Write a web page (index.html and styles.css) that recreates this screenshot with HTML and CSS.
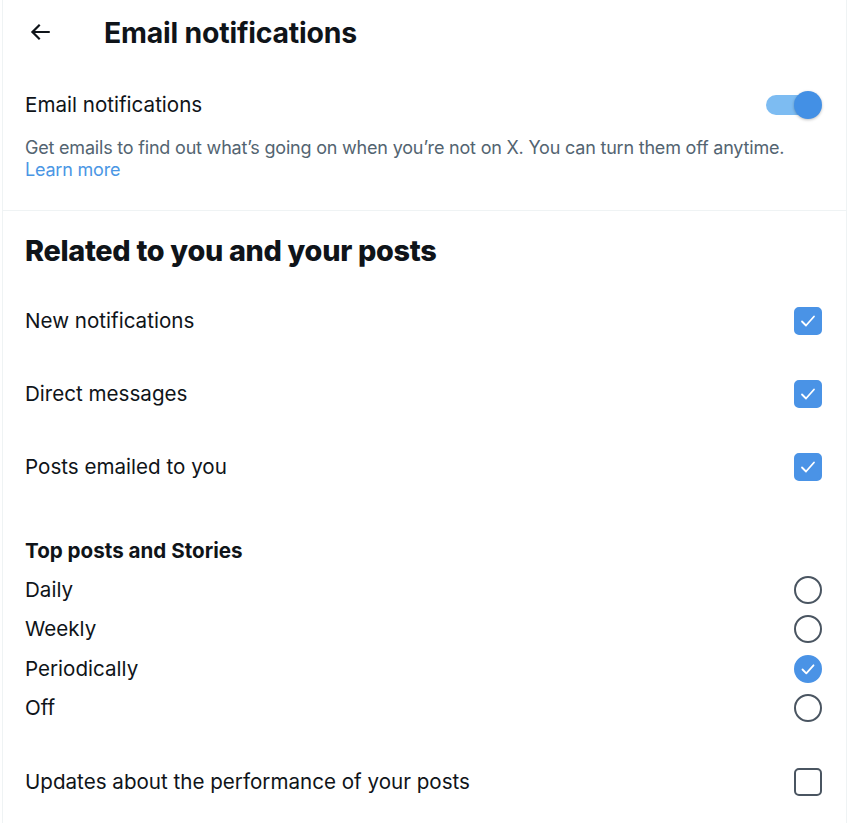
FILE: index.html
```html
<!DOCTYPE html>
<html lang="en">
<head>
<meta charset="utf-8">
<title>Email notifications</title>
<link rel="stylesheet" href="styles.css">
</head>
<body>
<main class="panel">
  <header class="topbar">
    <button class="back" aria-label="Back">
      <svg viewBox="0 0 24 24" width="26" height="26"><path d="M7.414 13l5.043 5.04-1.414 1.42L3.586 12l7.457-7.46 1.414 1.42L7.414 11H21v2H7.414z" fill="#0f1419"/></svg>
    </button>
    <h1 class="title">Email notifications</h1>
  </header>

  <section class="master">
    <div class="master-row">
      <span class="label">Email notifications</span>
      <span class="toggle"><span class="track"></span><span class="knob"></span></span>
    </div>
    <p class="desc">Get emails to find out what’s going on when you’re not on X. You can turn them off anytime. <br><a class="link" href="#">Learn more</a></p>
  </section>

  <section class="group">
    <h2 class="heading">Related to you and your posts</h2>
    <div class="row"><span class="label">New notifications</span><span class="check on"><svg viewBox="0 0 24 24"><path d="M6 12.5l4 4 8-9" fill="none" stroke="#fff" stroke-width="1.8" stroke-linecap="round" stroke-linejoin="round"/></svg></span></div>
    <div class="row"><span class="label">Direct messages</span><span class="check on"><svg viewBox="0 0 24 24"><path d="M6 12.5l4 4 8-9" fill="none" stroke="#fff" stroke-width="1.8" stroke-linecap="round" stroke-linejoin="round"/></svg></span></div>
    <div class="row"><span class="label">Posts emailed to you</span><span class="check on"><svg viewBox="0 0 24 24"><path d="M6 12.5l4 4 8-9" fill="none" stroke="#fff" stroke-width="1.8" stroke-linecap="round" stroke-linejoin="round"/></svg></span></div>

    <div class="radio-group">
      <h3 class="subheading">Top posts and Stories</h3>
      <div class="radio-row"><span class="label">Daily</span><span class="radio"></span></div>
      <div class="radio-row"><span class="label">Weekly</span><span class="radio"></span></div>
      <div class="radio-row"><span class="label">Periodically</span><span class="radio on"><svg viewBox="0 0 24 24"><path d="M6.5 12.5l3.8 3.8 7.2-8" fill="none" stroke="#fff" stroke-width="1.8" stroke-linecap="round" stroke-linejoin="round"/></svg></span></div>
      <div class="radio-row"><span class="label">Off</span><span class="radio"></span></div>
    </div>

    <div class="row last"><span class="label">Updates about the performance of your posts</span><span class="check"></span></div>
  </section>
</main>
</body>
</html>
```
FILE: styles.css
```css
* { box-sizing: border-box; }
html, body { margin: 0; padding: 0; background: #fff; }
body {
  font-family: Inter, "Noto Sans", "Liberation Sans", sans-serif;
  color: #0f1419;
  padding-left: 2px;
  width: 847px;
}
.panel {
  border-left: 1px solid #eff3f4;
  border-right: 1px solid #eff3f4;
  min-height: 823px;
}
.topbar {
  display: flex;
  align-items: center;
  height: 64px;
  padding-left: 22px;
}
.back {
  border: 0;
  background: none;
  padding: 0;
  width: 30px;
  height: 30px;
  display: flex;
  align-items: center;
  justify-content: center;
  margin-right: 49px;
}
.title {
  margin: 0;
  font-size: 28.4px;
  font-weight: 700;
  letter-spacing: -0.2px;
}
.master {
  padding: 19px 24px 0 22px;
  border-bottom: 1px solid #eff3f4;
  height: 147px;
}
.master-row {
  display: flex;
  justify-content: space-between;
  align-items: center;
  height: 44px;
}
.label {
  font-size: 20.6px;
  line-height: 24px;
}
.toggle {
  position: relative;
  width: 56px;
  height: 28px;
  display: block;
}
.track {
  position: absolute;
  left: 0;
  top: 4px;
  width: 50px;
  height: 20px;
  border-radius: 10px;
  background: #7dbcf2;
}
.knob {
  position: absolute;
  right: 0;
  top: 0;
  width: 28px;
  height: 28px;
  border-radius: 50%;
  background: #4390e5;
  box-shadow: 0 1px 3px rgba(0,0,0,0.25);
}
.desc {
  margin: 10px 0 0 0;
  font-size: 18px;
  line-height: 22px;
  color: #536471;
  letter-spacing: -0.2px;
}
.link {
  color: #4a96e4;
  text-decoration: none;
}
.group {
  padding: 22px 24px 0 22px;
}
.heading {
  margin: 0 0 16px 0;
  font-size: 28.8px;
  line-height: 36px;
  font-weight: 800;
  letter-spacing: -0.3px;
}
.row {
  display: flex;
  justify-content: space-between;
  align-items: center;
  height: 73px;
}
.row:first-of-type { margin-top: -1px; }
.check {
  width: 28px;
  height: 28px;
  border-radius: 5px;
  border: 2.5px solid #4a5561;
  display: flex;
  align-items: center;
  justify-content: center;
}
.check.on {
  background: #4a93e6;
  border-color: #4a93e6;
}
.check svg, .radio svg {
  width: 24px;
  height: 24px;
}
.radio-group {
  padding-top: 34px;
  padding-bottom: 17px;
}
.subheading {
  margin: 0 0 5px 0;
  font-size: 20.6px;
  line-height: 28px;
  font-weight: 700;
}
.radio-row {
  display: flex;
  justify-content: space-between;
  align-items: center;
  height: 39.5px;
}
.radio {
  width: 28px;
  height: 28px;
  border-radius: 50%;
  border: 2.5px solid #4a5561;
  display: flex;
  align-items: center;
  justify-content: center;
}
.radio.on {
  background: #4a93e6;
  border-color: #4a93e6;
}
```
